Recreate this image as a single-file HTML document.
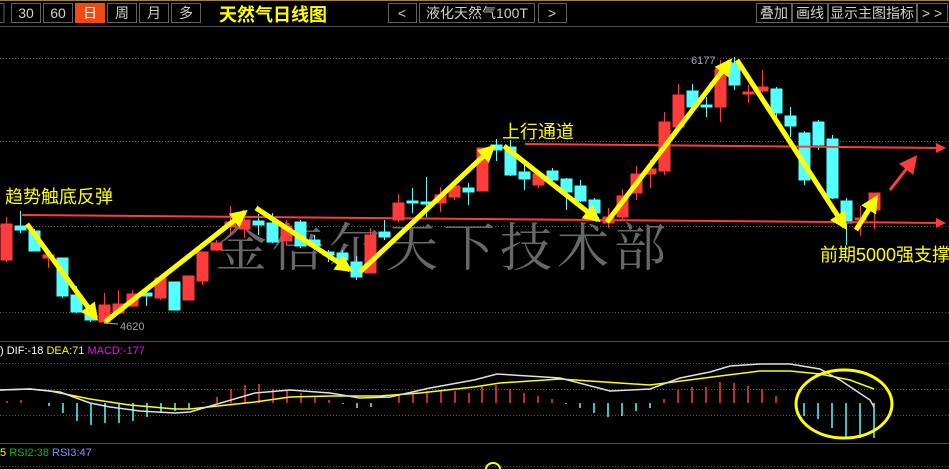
<!DOCTYPE html>
<html><head><meta charset="utf-8"><style>
body{margin:0;background:#000;width:949px;height:469px;overflow:hidden;font-family:"Liberation Sans","Noto Sans CJK SC",sans-serif}
</style></head><body>
<svg width="949" height="469" xmlns="http://www.w3.org/2000/svg" style="display:block">
<defs>
<marker id="ay" viewBox="0 0 10 10" refX="8" refY="5" markerWidth="3.5" markerHeight="3.5" orient="auto"><path d="M0 0L10 5L0 10z" fill="#ffff00"/></marker>
<marker id="ar" viewBox="0 0 10 10" refX="8" refY="5" markerWidth="5" markerHeight="5" orient="auto"><path d="M0 0L10 5L0 10z" fill="#ff3b3b"/></marker>
<marker id="ar2" viewBox="0 0 10 10" refX="8" refY="5" markerWidth="6" markerHeight="6" orient="auto"><path d="M0 0L10 5L0 10z" fill="#ff3b3b"/></marker>
</defs>
<rect width="949" height="469" fill="#000"/>
<line x1="0" y1="0.5" x2="949" y2="0.5" stroke="#a08040"/>
<line x1="0" y1="26.5" x2="949" y2="26.5" stroke="#505050"/>
<g fill="none" stroke="#606060">
<rect x="-5" y="3.5" width="9" height="19"/>
<rect x="11.5" y="3.5" width="29" height="19"/>
<rect x="43.5" y="3.5" width="29" height="19"/>
<rect x="107.5" y="3.5" width="29" height="19"/>
<rect x="139.5" y="3.5" width="29" height="19"/>
<rect x="171.5" y="3.5" width="29" height="19"/>
<rect x="388.5" y="3.5" width="28" height="19"/>
<rect x="419.5" y="3.5" width="115" height="19"/>
<rect x="538.5" y="3.5" width="28" height="19"/>
<rect x="756.5" y="3.5" width="35" height="19"/>
<rect x="792.5" y="3.5" width="35" height="19"/>
<rect x="828.5" y="3.5" width="88" height="19"/>
<rect x="917.5" y="3.5" width="30" height="19"/>
</g>
<rect x="75" y="3" width="30" height="20" fill="#f04a10"/>
<g fill="#d0d0d0" font-size="14" text-anchor="middle">
<text x="26" y="18">30</text><text x="58" y="18">60</text><text x="90" y="18" fill="#fff">日</text>
<text x="122" y="18">周</text><text x="154" y="18">月</text><text x="186" y="18">多</text>
<text x="402" y="18">&lt;</text><text x="477" y="18">液化天然气100T</text><text x="552" y="18">&gt;</text>
<text x="774" y="18">叠加</text><text x="810" y="18">画线</text><text x="872" y="18">显示主图指标</text><text x="932" y="18">&gt; &gt;</text>
</g>
<text x="219" y="21" fill="#ffff00" font-size="18" font-weight="bold">天然气日线图</text>
<g stroke="#555" stroke-dasharray="1,2">
<line x1="0" y1="58.5" x2="949" y2="58.5"/><line x1="0" y1="141.5" x2="949" y2="141.5"/>
<line x1="0" y1="226.5" x2="949" y2="226.5"/><line x1="0" y1="312.5" x2="949" y2="312.5"/>
<line x1="0" y1="363.5" x2="949" y2="363.5"/><line x1="0" y1="389.5" x2="949" y2="389.5"/>
<line x1="0" y1="415.5" x2="949" y2="415.5"/><line x1="0" y1="466.5" x2="949" y2="466.5"/>
</g>
<line x1="0" y1="341.5" x2="949" y2="341.5" stroke="#505050"/>
<line x1="0" y1="443.5" x2="949" y2="443.5" stroke="#505050"/>
<text x="215" y="266" fill="#686868" font-size="52" font-family="'Noto Serif CJK SC',serif" letter-spacing="5">金倍尔天下技术部</text>
<g>
<g stroke="#ff3b3b" fill="#ff3b3b">
<line x1="6.5" y1="217" x2="6.5" y2="262"/><rect x="1" y="224" width="11" height="36"/>
<line x1="48.5" y1="251" x2="48.5" y2="268"/><rect x="43" y="255" width="11" height="3"/>
<line x1="104.5" y1="293" x2="104.5" y2="324"/><rect x="99" y="305" width="11" height="17"/>
<line x1="118.5" y1="290" x2="118.5" y2="314"/><rect x="113" y="304" width="11" height="9"/>
<line x1="132.5" y1="290" x2="132.5" y2="307"/><rect x="127" y="294" width="11" height="12"/>
<line x1="160.5" y1="278" x2="160.5" y2="300"/><rect x="155" y="278" width="11" height="20"/>
<line x1="188.5" y1="276" x2="188.5" y2="300"/><rect x="183" y="276" width="11" height="24"/>
<line x1="202.5" y1="252" x2="202.5" y2="285"/><rect x="197" y="252" width="11" height="29"/>
<line x1="216.5" y1="240" x2="216.5" y2="251"/><rect x="211" y="243" width="11" height="7"/>
<line x1="230.5" y1="206" x2="230.5" y2="235"/><rect x="225" y="222" width="11" height="5"/>
<line x1="244.5" y1="218" x2="244.5" y2="238"/><rect x="239" y="220" width="11" height="9"/>
<line x1="286.5" y1="220" x2="286.5" y2="246"/><rect x="281" y="226" width="11" height="15"/>
<line x1="370.5" y1="228" x2="370.5" y2="273"/><rect x="365" y="235" width="11" height="38"/>
<line x1="398.5" y1="194" x2="398.5" y2="222"/><rect x="393" y="203" width="11" height="17"/>
<line x1="440.5" y1="187" x2="440.5" y2="212"/><rect x="435" y="195" width="11" height="8"/>
<line x1="454.5" y1="183" x2="454.5" y2="200"/><rect x="449" y="186" width="11" height="11"/>
<line x1="482.5" y1="148" x2="482.5" y2="191"/><rect x="477" y="148" width="11" height="43"/>
<line x1="538.5" y1="171" x2="538.5" y2="188"/><rect x="533" y="174" width="11" height="11"/>
<line x1="608.5" y1="208" x2="608.5" y2="228"/><rect x="603" y="217" width="11" height="6"/>
<line x1="622.5" y1="189" x2="622.5" y2="219"/><rect x="617" y="196" width="11" height="21"/>
<line x1="636.5" y1="166" x2="636.5" y2="200"/><rect x="631" y="174" width="11" height="19"/>
<line x1="650.5" y1="160" x2="650.5" y2="188"/><rect x="645" y="169" width="11" height="5"/>
<line x1="664.5" y1="112" x2="664.5" y2="175"/><rect x="659" y="122" width="11" height="49"/>
<line x1="678.5" y1="84" x2="678.5" y2="130"/><rect x="673" y="95" width="11" height="32"/>
<line x1="720.5" y1="60" x2="720.5" y2="122"/><rect x="715" y="69" width="11" height="38"/>
<line x1="748.5" y1="85" x2="748.5" y2="103"/><rect x="743" y="92" width="11" height="2"/>
<line x1="762.5" y1="70" x2="762.5" y2="92"/><rect x="757" y="87" width="11" height="4"/>
<line x1="860.5" y1="206" x2="860.5" y2="236"/><rect x="855" y="218" width="11" height="2"/>
<line x1="874.5" y1="193" x2="874.5" y2="229"/><rect x="869" y="193" width="11" height="17"/>
</g>
<g stroke="#54ffff" fill="#54ffff">
<line x1="20.5" y1="211" x2="20.5" y2="233"/><rect x="15" y="226" width="11" height="4"/>
<line x1="34.5" y1="229" x2="34.5" y2="251"/><rect x="29" y="231" width="11" height="20"/>
<line x1="62.5" y1="258" x2="62.5" y2="298"/><rect x="57" y="258" width="11" height="38"/>
<line x1="76.5" y1="286" x2="76.5" y2="313"/><rect x="71" y="295" width="11" height="17"/>
<line x1="90.5" y1="310" x2="90.5" y2="322"/><rect x="85" y="310" width="11" height="10"/>
<line x1="146.5" y1="288" x2="146.5" y2="306"/><rect x="141" y="293" width="11" height="3"/>
<line x1="174.5" y1="282" x2="174.5" y2="310"/><rect x="169" y="282" width="11" height="28"/>
<line x1="258.5" y1="214" x2="258.5" y2="235"/><rect x="253" y="221" width="11" height="4"/>
<line x1="272.5" y1="213" x2="272.5" y2="243"/><rect x="267" y="223" width="11" height="19"/>
<line x1="300.5" y1="220" x2="300.5" y2="248"/><rect x="295" y="222" width="11" height="24"/>
<line x1="314.5" y1="235" x2="314.5" y2="250"/><rect x="309" y="240" width="11" height="6"/>
<line x1="328.5" y1="250" x2="328.5" y2="262"/><rect x="323" y="252" width="11" height="3"/>
<line x1="342.5" y1="250" x2="342.5" y2="262"/><rect x="337" y="253" width="11" height="7"/>
<line x1="356.5" y1="256" x2="356.5" y2="280"/><rect x="351" y="262" width="11" height="15"/>
<line x1="384.5" y1="220" x2="384.5" y2="240"/><rect x="379" y="232" width="11" height="5"/>
<line x1="412.5" y1="188" x2="412.5" y2="213"/><rect x="407" y="201" width="11" height="2"/>
<line x1="426.5" y1="177" x2="426.5" y2="217"/><rect x="421" y="202" width="11" height="2"/>
<line x1="468.5" y1="183" x2="468.5" y2="205"/><rect x="463" y="188" width="11" height="4"/>
<line x1="496.5" y1="139" x2="496.5" y2="161"/><rect x="491" y="145" width="11" height="5"/>
<line x1="510.5" y1="140" x2="510.5" y2="176"/><rect x="505" y="147" width="11" height="28"/>
<line x1="524.5" y1="163" x2="524.5" y2="190"/><rect x="519" y="172" width="11" height="7"/>
<line x1="552.5" y1="168" x2="552.5" y2="181"/><rect x="547" y="171" width="11" height="9"/>
<line x1="566.5" y1="178" x2="566.5" y2="210"/><rect x="561" y="179" width="11" height="13"/>
<line x1="580.5" y1="180" x2="580.5" y2="202"/><rect x="575" y="186" width="11" height="15"/>
<line x1="594.5" y1="198" x2="594.5" y2="214"/><rect x="589" y="200" width="11" height="13"/>
<line x1="692.5" y1="84" x2="692.5" y2="109"/><rect x="687" y="91" width="11" height="16"/>
<line x1="706.5" y1="97" x2="706.5" y2="117"/><rect x="701" y="105" width="11" height="2"/>
<line x1="734.5" y1="57" x2="734.5" y2="90"/><rect x="729" y="63" width="11" height="22"/>
<line x1="776.5" y1="87" x2="776.5" y2="120"/><rect x="771" y="89" width="11" height="24"/>
<line x1="790.5" y1="107" x2="790.5" y2="137"/><rect x="785" y="116" width="11" height="10"/>
<line x1="804.5" y1="131" x2="804.5" y2="185"/><rect x="799" y="133" width="11" height="47"/>
<line x1="818.5" y1="120" x2="818.5" y2="150"/><rect x="813" y="122" width="11" height="23"/>
<line x1="832.5" y1="135" x2="832.5" y2="199"/><rect x="827" y="139" width="11" height="59"/>
<line x1="846.5" y1="198" x2="846.5" y2="245"/><rect x="841" y="201" width="11" height="22"/>
</g>
</g>
<g stroke="#ff3b3b" stroke-width="2">
<line x1="22" y1="215" x2="944" y2="223" marker-end="url(#ar)"/>
<line x1="525" y1="144" x2="944" y2="148" marker-end="url(#ar)"/>
<line x1="890" y1="190" x2="915" y2="158" stroke-width="3" marker-end="url(#ar2)"/>
</g>
<g stroke="#ffff00" stroke-width="5" marker-end="url(#ay)">
<line x1="27" y1="224" x2="96" y2="318"/>
<line x1="105" y1="322" x2="245" y2="212"/>
<line x1="256" y1="208" x2="350" y2="270"/>
<line x1="360" y1="272" x2="493" y2="147"/>
<line x1="504" y1="146" x2="598" y2="220"/>
<line x1="607" y1="222" x2="730" y2="61"/>
<line x1="737" y1="60" x2="845" y2="227"/>
<line x1="856" y1="230" x2="876" y2="198"/>
</g>
<g font-size="11" fill="#a0a0b0"><text x="691" y="64">6177</text><text x="120" y="330">4620</text></g>
<line x1="104" y1="323" x2="118" y2="324" stroke="#aaa"/>
<g fill="#ffff00" font-size="18">
<text x="5" y="203">趋势触底反弹</text>
<text x="502" y="138">上行通道</text>
<text x="820" y="261">前期5000强支撑</text>
</g>
<g font-size="11"><text x="0" y="354" fill="#fff">) DIF:-18 <tspan fill="#ffff00">DEA:71</tspan> <tspan fill="#ff00ff">MACD:-177</tspan></text>
<text x="0" y="456" fill="#ffff00">5 <tspan fill="#00c000">RSI2:38</tspan> <tspan fill="#8090ff">RSI3:47</tspan></text></g>
<g stroke="#ff3b3b" stroke-width="1.5">
<path d="M7 403v-2M21 403v-3M203 403v-1M217 403v-6M231 403v-14M245 403v-18M259 403v-19M273 403v-14M287 403v-12M301 403v-10M315 403v-6M329 403v-3M399 403v-9M413 403v-10M427 403v-12M441 403v-12M455 403v-12M469 403v-10M482 403v-17M496 403v-18M510 403v-14M524 403v-10M538 403v-7M552 403v-4M664 403v-4M678 403v-13M692 403v-16M706 403v-16M720 403v-21M734 403v-20M748 403v-17M762 403v-14M776 403v-7"/>
</g>
<g stroke="#54ffff" stroke-width="1.5">
<path d="M49 403v3M63 403v10M77 403v18M91 403v22M105 403v20M119 403v20M133 403v18M147 403v14M161 403v10M175 403v8M189 403v6M343 403v1M357 403v5M371 403v4M566 403v1M580 403v5M594 403v10M608 403v14M622 403v13M636 403v8M650 403v5M804 403v13M818 403v16M832 403v25M846 403v35M860 403v35M874 403v35"/>
</g>
<polyline fill="none" stroke="#ffff00" stroke-width="1.5" points="0,390 30,389 50,391 90,399 130,405 175,409 190,409 255,402 290,397 330,396 380,396 420,393 474,387 500,383 560,379 650,385 720,376 760,371 790,371 820,374 850,380 874,389"/>
<polyline fill="none" stroke="#e0e0e0" stroke-width="1.5" points="0,390 30,389 60,392 90,403 110,407 140,411 175,413 190,412 255,393 290,390 330,393 360,398 390,397 430,388 474,380 497,374 560,378 610,391 650,389 680,378 710,372 730,366 760,364 790,364 820,369 840,380 870,400 874,407"/>
<ellipse cx="844" cy="404" rx="48" ry="34" fill="none" stroke="#ffff00" stroke-width="3"/>
<path d="M486 469a7 6 0 0 1 14 0" fill="none" stroke="#ffff00" stroke-width="2"/>
</svg>
</body></html>
